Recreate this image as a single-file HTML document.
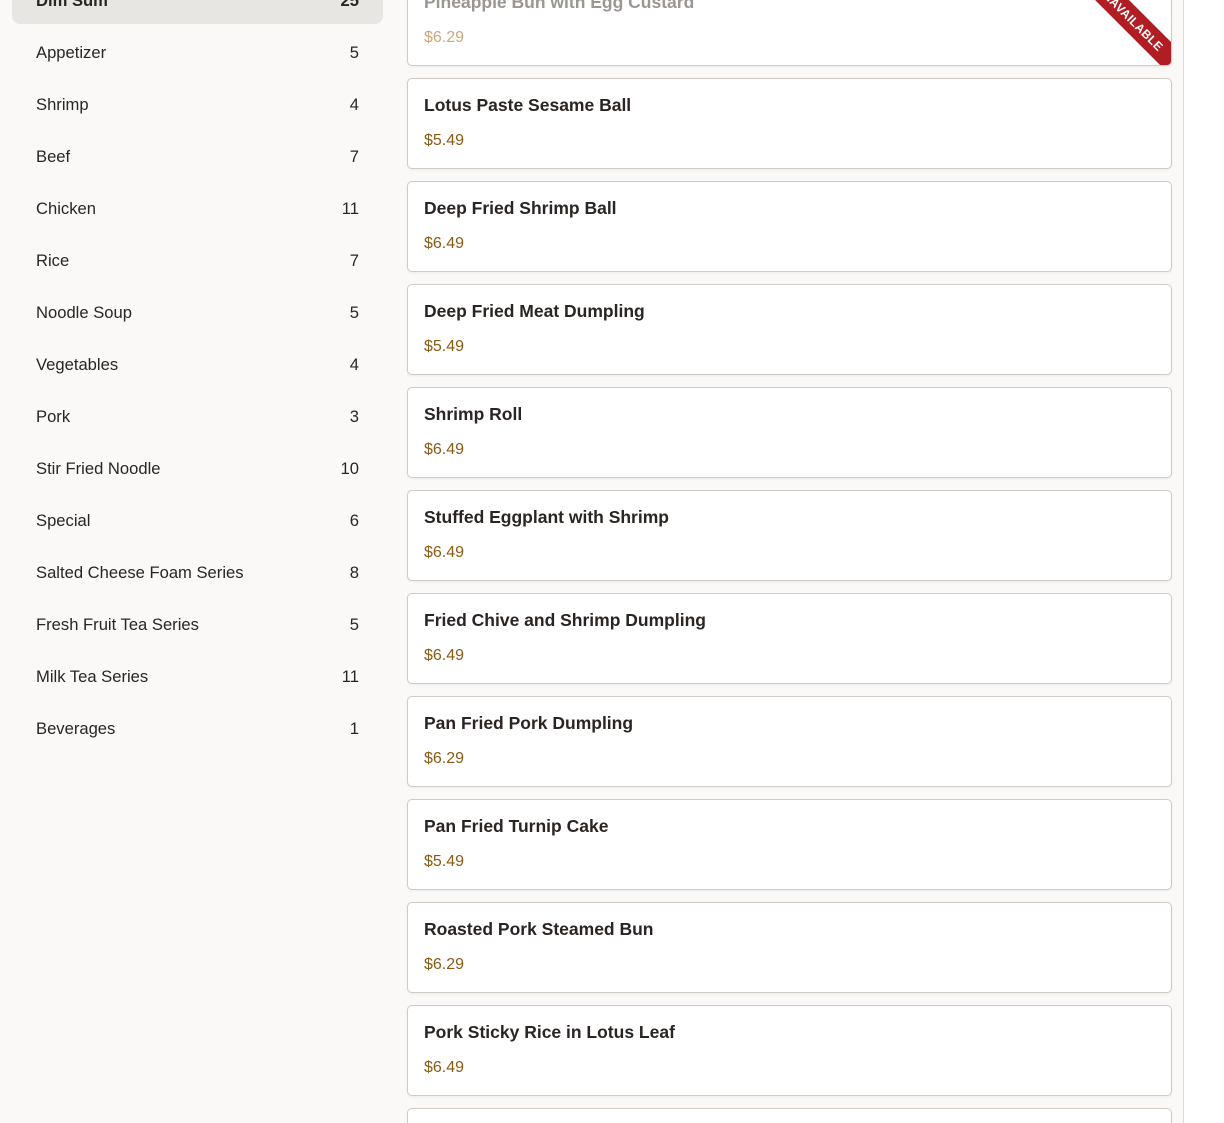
<!DOCTYPE html>
<html style="overflow:hidden;height:1123px"><head><meta charset="utf-8"><style>
*{box-sizing:border-box;margin:0;padding:0}
body{width:1224px;height:1123px;overflow:hidden;background:#fff;font-family:"Liberation Sans",sans-serif;position:relative}
.main{position:absolute;left:0;top:0;width:1184px;height:1123px;background:#faf9f7;border-right:1px solid #dedbd6;overflow:hidden}
.side{position:absolute;left:12px;top:0;width:371px}
.item{position:absolute;left:0;width:371px;height:48px;display:flex;align-items:center;justify-content:space-between;padding:0 24px;font-size:16.6px;color:#2a2522;padding-top:2px}
.item.act{background:#e8e6e3;border-radius:8px;font-weight:bold}
.card{position:absolute;left:407px;width:765px;height:91px;background:#fff;border:1px solid #cfcbc6;border-radius:5px;overflow:hidden;box-shadow:0 1px 2px rgba(0,0,0,.06)}
.card .t{position:absolute;left:16px;top:16px;font-size:17.5px;font-weight:bold;color:#2a2522}
.card .p{position:absolute;left:16px;top:53px;font-size:16px;color:#8a5a14}
.card.un .t{color:#9a9692}.card.un .p{color:#c9a97c}
.rib{position:absolute;left:622px;top:30px;width:200px;height:24px;background:#b01e23;color:#fff;font-size:12px;font-weight:bold;text-align:center;line-height:24px;transform:rotate(45deg);letter-spacing:.3px}
</style></head><body><div class="main">
<div class="side">
<div class="item act" style="top:-24px"><span>Dim Sum</span><span>25</span></div>
<div class="item" style="top:28px"><span>Appetizer</span><span>5</span></div>
<div class="item" style="top:80px"><span>Shrimp</span><span>4</span></div>
<div class="item" style="top:132px"><span>Beef</span><span>7</span></div>
<div class="item" style="top:184px"><span>Chicken</span><span>11</span></div>
<div class="item" style="top:236px"><span>Rice</span><span>7</span></div>
<div class="item" style="top:288px"><span>Noodle Soup</span><span>5</span></div>
<div class="item" style="top:340px"><span>Vegetables</span><span>4</span></div>
<div class="item" style="top:392px"><span>Pork</span><span>3</span></div>
<div class="item" style="top:444px"><span>Stir Fried Noodle</span><span>10</span></div>
<div class="item" style="top:496px"><span>Special</span><span>6</span></div>
<div class="item" style="top:548px"><span>Salted Cheese Foam Series</span><span>8</span></div>
<div class="item" style="top:600px"><span>Fresh Fruit Tea Series</span><span>5</span></div>
<div class="item" style="top:652px"><span>Milk Tea Series</span><span>11</span></div>
<div class="item" style="top:704px"><span>Beverages</span><span>1</span></div>
</div>
<div class="card un" style="top:-25px"><div class="t">Pineapple Bun with Egg Custard</div><div class="p">$6.29</div><div class="rib">UNAVAILABLE</div></div>
<div class="card" style="top:78px"><div class="t">Lotus Paste Sesame Ball</div><div class="p">$5.49</div></div>
<div class="card" style="top:181px"><div class="t">Deep Fried Shrimp Ball</div><div class="p">$6.49</div></div>
<div class="card" style="top:284px"><div class="t">Deep Fried Meat Dumpling</div><div class="p">$5.49</div></div>
<div class="card" style="top:387px"><div class="t">Shrimp Roll</div><div class="p">$6.49</div></div>
<div class="card" style="top:490px"><div class="t">Stuffed Eggplant with Shrimp</div><div class="p">$6.49</div></div>
<div class="card" style="top:593px"><div class="t">Fried Chive and Shrimp Dumpling</div><div class="p">$6.49</div></div>
<div class="card" style="top:696px"><div class="t">Pan Fried Pork Dumpling</div><div class="p">$6.29</div></div>
<div class="card" style="top:799px"><div class="t">Pan Fried Turnip Cake</div><div class="p">$5.49</div></div>
<div class="card" style="top:902px"><div class="t">Roasted Pork Steamed Bun</div><div class="p">$6.29</div></div>
<div class="card" style="top:1005px"><div class="t">Pork Sticky Rice in Lotus Leaf</div><div class="p">$6.49</div></div>
<div class="card" style="top:1108px;height:15px;border-bottom:none;border-radius:5px 5px 0 0"></div>
</div></body></html>
